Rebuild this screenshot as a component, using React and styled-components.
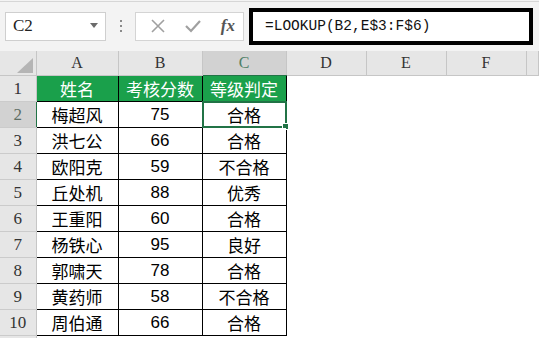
import React from "react"
import styled, { createGlobalStyle } from "styled-components"

const GlobalStyle = createGlobalStyle`
  html, body {
    margin: 0;
    padding: 0;
    background: #ffffff;
    overflow: hidden;
  }
  body {
    font-family: "Liberation Sans", "Noto Sans CJK SC", sans-serif;
  }
`

const rows = [
  ["梅超风", "75", "合格"],
  ["洪七公", "66", "合格"],
  ["欧阳克", "59", "不合格"],
  ["丘处机", "88", "优秀"],
  ["王重阳", "60", "合格"],
  ["杨铁心", "95", "良好"],
  ["郭啸天", "78", "合格"],
  ["黄药师", "58", "不合格"],
  ["周伯通", "66", "合格"],
]

const Page = styled.div`
  width: 539px;
  height: 338px;
  overflow: hidden;
  background: #f3f3f3;
`

const Bar = styled.div`
  display: flex;
  align-items: center;
  height: 48px;
  margin-top: 1px;
  border-top: 1px solid #d6d6d6;
  padding-left: 5px;
  background: #f3f3f3;
`

const NameBox = styled.div`
  box-sizing: border-box;
  width: 101px;
  height: 29px;
  display: flex;
  align-items: center;
  justify-content: space-between;
  padding: 0 7px 0 7px;
  background: #fff;
  border: 1px solid #cfcfcf;
  font-family: "Liberation Serif", serif;
  font-size: 17px;
  color: #222;
`

const Caret = styled.span`
  width: 0;
  height: 0;
  margin-top: -2px;
  border-left: 4px solid transparent;
  border-right: 4px solid transparent;
  border-top: 5px solid #6b6b6b;
`

const Dots = styled.div`
  display: flex;
  flex-direction: column;
  gap: 3px;
  margin: 0 13px 0 14px;
  span {
    width: 2px;
    height: 2px;
    background: #8a8a8a;
  }
`

const Tools = styled.div`
  box-sizing: border-box;
  width: 109px;
  height: 29px;
  display: flex;
  align-items: center;
  justify-content: space-between;
  padding: 0 8px 0 14px;
  background: #fff;
  border: 1px solid #d4d4d4;
`

const Fx = styled.span`
  font-family: "Liberation Serif", serif;
  font-style: italic;
  font-weight: bold;
  font-size: 17px;
  color: #555;
`

const Formula = styled.div`
  box-sizing: border-box;
  width: 284px;
  height: 37px;
  margin-left: 5px;
  display: flex;
  align-items: center;
  padding-left: 12px;
  background: #fff;
  border: 4px solid #000;
  font-family: "Liberation Mono", monospace;
  font-size: 14.5px;
  color: #111;
`

const Sheet = styled.table`
  border-collapse: collapse;
  table-layout: fixed;
  width: 539px;
  margin-top: 1px;
  background: #fff;
`

const ColHead = styled.th`
  height: 24px;
  padding: 0;
  background: ${(p) => (p.$active ? "#d2d2d2" : "#e6e6e6")};
  border-right: 1px solid #c6c6c6;
  border-bottom: 1px solid ${(p) => (p.$active ? "#217346" : "#c6c6c6")};
  font-family: "Liberation Serif", serif;
  font-weight: normal;
  font-size: 16px;
  color: ${(p) => (p.$active ? "#4f7f65" : "#333")};
  text-align: center;
`

const Corner = styled.th`
  position: relative;
  padding: 0;
  background: #e6e6e6;
  border-right: 1px solid #c6c6c6;
  border-bottom: 1px solid #c6c6c6;
  &::after {
    content: "";
    position: absolute;
    right: 3px;
    bottom: 2px;
    border-left: 16px solid transparent;
    border-bottom: 15px solid #b5b5b5;
  }
`

const RowHead = styled.th`
  height: 25px;
  padding: 0;
  background: ${(p) => (p.$active ? "#d2d2d2" : "#e6e6e6")};
  border-bottom: 1px solid #cbcbcb;
  border-right: 1px solid ${(p) => (p.$active ? "#217346" : "#c6c6c6")};
  font-family: "Liberation Serif", serif;
  font-weight: normal;
  font-size: 17px;
  color: ${(p) => (p.$active ? "#5d6d64" : "#333")};
  text-align: center;
`

const Cell = styled.td`
  position: relative;
  padding: 0;
  border: 1px solid #000;
  background: ${(p) => (p.$head ? "#1aa04b" : "#fff")};
  color: ${(p) => (p.$head ? "#fff" : "#000")};
  font-family: "Liberation Sans", "Noto Sans CJK SC", sans-serif;
  font-size: 17px;
  text-align: center;
  white-space: nowrap;
  overflow: visible;
`

const Blank = styled.td`
  padding: 0;
`

const Selection = styled.span`
  position: absolute;
  left: -1px;
  top: -1px;
  right: -1px;
  bottom: -1px;
  border: 2px solid #217346;
  pointer-events: none;
  &::after {
    content: "";
    position: absolute;
    right: -4px;
    bottom: -4px;
    width: 5px;
    height: 5px;
    background: #217346;
    border: 1px solid #fff;
  }
`

export default function App() {
  return (
    <Page>
      <GlobalStyle />
      <Bar>
        <NameBox>
          C2
          <Caret />
        </NameBox>
        <Dots>
          <span />
          <span />
          <span />
        </Dots>
        <Tools>
          <svg width="16" height="16" viewBox="0 0 16 16">
            <path d="M2 2L14 14M14 2L2 14" stroke="#a0a0a0" strokeWidth="1.6" fill="none" />
          </svg>
          <svg width="18" height="16" viewBox="0 0 18 16">
            <path d="M2 8L7 13L16 3" stroke="#a0a0a0" strokeWidth="2.2" fill="none" />
          </svg>
          <Fx>fx</Fx>
        </Tools>
        <Formula>=LOOKUP(B2,E$3:F$6)</Formula>
      </Bar>
      <Sheet>
        <colgroup>
          <col style={{ width: 36 }} />
          <col style={{ width: 82 }} />
          <col style={{ width: 84 }} />
          <col style={{ width: 84 }} />
          <col style={{ width: 80 }} />
          <col style={{ width: 80 }} />
          <col style={{ width: 80 }} />
          <col />
        </colgroup>
        <thead>
          <tr>
            <Corner />
            <ColHead>A</ColHead>
            <ColHead>B</ColHead>
            <ColHead $active>C</ColHead>
            <ColHead>D</ColHead>
            <ColHead>E</ColHead>
            <ColHead>F</ColHead>
            <ColHead />
          </tr>
        </thead>
        <tbody>
          <tr>
            <RowHead>1</RowHead>
            <Cell $head>姓名</Cell>
            <Cell $head>考核分数</Cell>
            <Cell $head>等级判定</Cell>
            <Blank />
            <Blank />
            <Blank />
            <Blank />
          </tr>
          {rows.map((r, i) => (
            <tr key={i}>
              <RowHead $active={i === 0}>{i + 2}</RowHead>
              <Cell>{r[0]}</Cell>
              <Cell>{r[1]}</Cell>
              <Cell>
                {r[2]}
                {i === 0 && <Selection />}
              </Cell>
              <Blank />
              <Blank />
              <Blank />
              <Blank />
            </tr>
          ))}
          <tr>
            <RowHead />
            <Blank />
            <Blank />
            <Blank />
            <Blank />
            <Blank />
            <Blank />
            <Blank />
          </tr>
        </tbody>
      </Sheet>
    </Page>
  )
}
